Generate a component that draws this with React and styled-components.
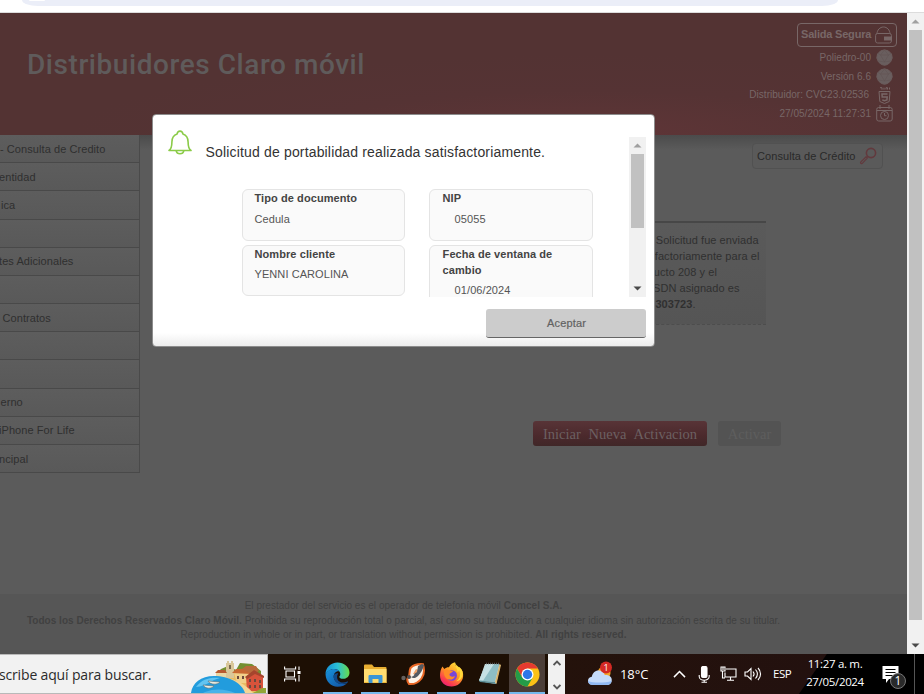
import React from "react";
import styled, { createGlobalStyle } from "styled-components";

const Global = createGlobalStyle`
  *, *::before, *::after { box-sizing: border-box; }
  html, body { margin: 0; padding: 0; overflow: hidden; }
  body { font-family: "Liberation Sans", Arial, sans-serif; }
  svg { display: block; flex: none; }
`;

const Window = styled.div`
  position: relative;
  display: flex;
  flex-direction: column;
  width: 924px;
  height: 694px;
  overflow: hidden;
`;

/* ---------- browser strip ---------- */
const BrowserStrip = styled.div`
  height: 13px;
  flex: none;
  background: #fff;
  border-bottom: 1px solid #dcdcdc;
  padding-left: 22px;
`;
const AddressBar = styled.div`
  width: 816px;
  height: 6px;
  padding-left: 7px;
  background: #ebeef8;
  border-radius: 0 0 16px 16px / 0 0 6px 6px;
`;
const AddressIcon = styled.div`
  width: 16px;
  height: 1px;
  background: #fff;
  border-radius: 0 0 8px 8px;
`;

const Main = styled.div`
  display: flex;
  height: 641px;
  flex: none;
`;
const Page = styled.div`
  width: 907px;
  display: flex;
  flex-direction: column;
  background: #5b5b5b;
`;

/* ---------- header ---------- */
const Header = styled.header`
  height: 122px;
  flex: none;
  display: flex;
  justify-content: space-between;
  padding: 10px 10px 0 27px;
  background: radial-gradient(ellipse 520px 80px at 590px 122px, #5f3537 0%, #553334 55%, #533333 100%);
`;
const SiteTitle = styled.h1`
  margin: 22px 0 0;
  font: 500 28px/40px Roboto, sans-serif;
  letter-spacing: 0.56px;
  color: #5f5b5b;
`;
const Session = styled.div`
  display: flex;
  flex-direction: column;
  align-items: flex-end;
  color: #786767;
`;
const ExitButton = styled.div`
  display: flex;
  align-items: center;
  justify-content: space-between;
  width: 100px;
  height: 24px;
  padding: 0 4px 2px 3px;
  margin-bottom: 1px;
  border: 1px solid #786767;
  border-radius: 4px;
  font-size: 11px;
  font-weight: bold;
  letter-spacing: -0.2px;
  svg { margin-top: 2px; }
`;
const SessionRow = styled.div`
  display: flex;
  align-items: center;
  justify-content: flex-end;
  height: ${(p) => p.$h || 18}px;
  gap: 5px;
  padding-right: 4px;
  font-size: 10px;
  letter-spacing: 0.03px;
  white-space: nowrap;
`;
const SessionText = styled.span`
  margin-right: ${(p) => p.$shift || 0}px;
  padding-bottom: ${(p) => (p.$shift ? 1 : 0)}px;
`;

/* ---------- body ---------- */
const Body = styled.div`
  display: flex;
  flex: 1;
  min-height: 0;
`;
const Sidebar = styled.nav`
  width: 140px;
  flex: none;
`;
const MenuItem = styled.div`
  height: ${(p) => p.$h || 28}px;
  padding-left: ${(p) => p.$x || 0}px;
  margin-left: ${(p) => p.$out || 0}px;
  line-height: ${(p) => (p.$low ? 29 : (p.$h || 28) - 1)}px;
  font-size: 11px;
  letter-spacing: 0.07px;
  white-space: nowrap;
  color: #2f2f2f;
  background: linear-gradient(#5d5d5d, #595959);
  border-bottom: 1px solid #494949;
  border-right: 1px solid #4a4a4a;
`;
const Content = styled.section`
  flex: 1;
  display: flex;
  flex-direction: column;
  background: linear-gradient(#4b4b4b, #5b5b5b 15px);
  padding-top: 8px;
`;
const CreditButton = styled.div`
  display: flex;
  align-items: center;
  justify-content: space-between;
  align-self: flex-end;
  width: 131px;
  height: 26px;
  margin-right: 24px;
  padding: 0 5px 0 4px;
  border: 1px solid #515151;
  border-radius: 4px;
  background: #5a5a5a;
  color: #292929;
  font-size: 11px;
  letter-spacing: 0.07px;
`;
const Notice = styled.div`
  width: 120px;
  height: 104px;
  margin: 52px 141px 0 0;
  align-self: flex-end;
  padding: 9px 0 0 7px;
  border-top: 2px solid #474747;
  border-bottom: 1px dashed #4d4d4d;
  background: linear-gradient(#5a5a5a, #555);
  color: #303030;
  font-size: 11px;
  line-height: 16px;
  letter-spacing: 0.06px;
  white-space: nowrap;
`;
const NoticeLine = styled.div`
  padding-left: ${(p) => p.$x || 0}px;
`;
const Actions = styled.div`
  display: flex;
  justify-content: flex-end;
  gap: 11px;
  margin: 96px 126px 0 0;
  font-family: "Liberation Serif", serif;
`;
const ActionButton = styled.div`
  width: ${(p) => p.$w}px;
  height: 25px;
  border-radius: 3px;
  text-align: center;
  line-height: 27px;
  font-size: 14.5px;
  word-spacing: 4.2px;
  white-space: nowrap;
  color: ${(p) => (p.$primary ? "#6c6062" : "#5e5e5e")};
  background: ${(p) => (p.$primary ? "linear-gradient(#583437, #4b292c 60%, #402728)" : "#535353")};
`;
const Footer = styled.footer`
  height: 60px;
  flex: none;
  padding: 5px 100px 0 0;
  background: #565656;
  text-align: center;
  font-size: 10px;
  letter-spacing: 0.028px;
  line-height: 14.6px;
  white-space: nowrap;
  color: #414141;
`;

/* ---------- scroll bars ---------- */
const ScrollTrack = styled.div`
  width: 17px;
  flex: none;
  display: flex;
  flex-direction: column;
  align-items: center;
  background: #f1f1f1;
  height: 100%;
`;
const ArrowBox = styled.div`
  width: 17px;
  height: 17px;
  display: flex;
  align-items: center;
  justify-content: center;
  margin-top: ${(p) => (p.$end ? "auto" : 0)};
`;
const Thumb = styled.div`
  width: 13px;
  height: ${(p) => p.$h}px;
  background: #c1c1c1;
`;

/* ---------- dialog ---------- */
const Dialog = styled.div`
  position: absolute;
  left: 152px;
  top: 114px;
  width: 503px;
  height: 233px;
  display: flex;
  flex-direction: column;
  border: 1px solid #8c8c8c;
  border-radius: 4px;
  background: linear-gradient(#fff 0 218px, #ececec 231px);
`;
const DialogBody = styled.div`
  display: flex;
  padding: 0 8px 0 15px;
`;
const BellSlot = styled.div`
  width: 37px;
  padding-top: 15px;
`;
const Viewport = styled.div`
  width: 424px;
  height: 160px;
  margin-top: 22px;
  overflow: hidden;
`;
const DialogScroll = styled.div`
  height: 160px;
  margin-top: 22px;
`;
const Message = styled.div`
  height: 52px;
  padding-left: 0.6px;
  line-height: 31px;
  font-size: 14px;
  letter-spacing: 0.16px;
  color: #333;
`;
const CardGrid = styled.div`
  display: grid;
  grid-template-columns: 163px 164px;
  grid-template-rows: 52px 51px;
  gap: 4px 24px;
  margin-left: 37px;
`;
const Card = styled.div`
  height: ${(p) => p.$h || "100%"};
  padding: 0 12px 0 ${(p) => p.$pad || 11.5}px;
  border: 1px solid #e4e4e4;
  border-radius: 6px;
  background: #fafafa;
  font-size: 11px;
  line-height: 16px;
  letter-spacing: 0.08px;
  color: #555;
`;
const CardLabel = styled.div`
  font-weight: bold;
  color: #444;
`;
const CardValue = styled.div`
  margin-top: ${(p) => p.$gap}px;
  padding-left: ${(p) => (p.$indent ? 12 : 0)}px;
`;
const AcceptButton = styled.div`
  align-self: flex-end;
  width: 160px;
  height: 29px;
  margin: 12px 8px 0 0;
  padding-left: 1px;
  border-radius: 3px;
  border-bottom: 1px solid #666;
  background: #ccc;
  text-align: center;
  line-height: 28px;
  font-size: 11px;
  letter-spacing: 0.15px;
  color: #626262;
  -webkit-text-stroke: 0.2px #626262;
`;

/* ---------- task bar ---------- */
const Taskbar = styled.div`
  display: flex;
  height: 40px;
  flex: none;
  background: #1d0f04;
  color: #fff;
  font-family: "Open Sans", "Noto Sans", sans-serif;
`;
const SearchBox = styled.div`
  display: flex;
  justify-content: space-between;
  width: 268px;
  background: #f2f2f2;
  border: 1px solid #b9b9b9;
  border-left: 0;
  color: #2b2b2b;
  font-size: 14px;
  letter-spacing: -0.16px;
  line-height: 40px;
  white-space: nowrap;
`;
const SearchHint = styled.span`
  margin-left: -1px;
`;
const TaskView = styled.div`
  width: 50px;
  padding: 12px 0 0 16px;
`;
const TaskButton = styled.div`
  width: ${(p) => (p.$active ? 36 : 29)}px;
  margin: 0 ${(p) => (p.$active ? 1 : 4)}px 0 ${(p) => (p.$active ? 1 : 5)}px;
  height: 40px;
  display: flex;
  align-items: center;
  justify-content: center;
  border-bottom: 2px solid #76b9ed;
  padding-top: 2px;
  background: ${(p) => (p.$active ? "#4b3e38" : "transparent")};
`;
const BandScroller = styled.div`
  width: 17px;
  margin-left: 2px;
  display: flex;
  flex-direction: column;
  align-items: center;
  justify-content: space-between;
  padding: 6px 0 4px;
  background: #f1f1f1;
`;
const Tray = styled.div`
  flex: 1;
  display: flex;
  align-items: center;
  padding-left: 22px;
  background: linear-gradient(125deg, #24120b 0, #23110f 214px, #000 215px);
`;
const Temperature = styled.div`
  width: 53px;
  margin-left: 7px;
  font-size: 13px;
  letter-spacing: -0.1px;
`;
const TrayIcon = styled.div`
  width: ${(p) => p.$w}px;
`;
const Language = styled.div`
  width: 30px;
  padding: 0 0 2px 1px;
  font-size: 11.5px;
  letter-spacing: -0.5px;
`;
const Clock = styled.div`
  width: 66px;
  text-align: center;
  font-size: 11.5px;
  line-height: 18px;
  letter-spacing: -0.33px;
  white-space: nowrap;
  padding-bottom: 2px;
`;
const Notifications = styled.div`
  width: 37px;
  height: 40px;
  margin-left: 10px;
  border-right: 1px solid #555;
`;

const Arrow = ({ down, color }) => (
  <svg width="9" height="5" viewBox="0 0 9 5">
    <path d={down ? "M.5.5h8l-4 4z" : "M.5 4.5h8l-4-4z"} fill={color} />
  </svg>
);

const LockIcon = () => (
  <svg width="17" height="18" viewBox="0 0 17 18" fill="none" stroke="#786767">
    <path d="M2 8C2 4 5 1 8.500 1s6.500 3 6.500 7" />
    <rect x=".6" y="7.500" width="15.800" height="9.500" rx="2" />
    <path d="M9 10.500h8v4H9z" fill="#786767" stroke="none" />
  </svg>
);
const PolyIcon = () => (
  <svg width="17" height="17" viewBox="0 0 17 17">
    <path d="M8.500.8 12.500 2 15.500 5l.7 4-1.700 4-3 2.500-3 .8-3-.8-3-2.500L.8 9l.7-4 3-3z" fill="#695e5e" stroke="#6b5d5d" />
    <path d="m8.500 1-4 5 4 7 4-7zM2 4.500l2.500 1.500h8L15 4.500M2 12l6.500 1L15 12" fill="none" stroke="#615353" strokeWidth=".5" />
  </svg>
);
const Html5Icon = () => (
  <svg width="17" height="17" viewBox="0 0 17 17" fill="none" stroke="#786767">
    <path d="M4 .7h2v2M8 .7v2M10 2.500V.7h1.500v1.800M13.500.5v2" />
    <path d="m3 4.500.8 10 4.700 2 4.700-2 .8-10z" />
    <path d="M11.500 7H6l.2 3h5l-.3 3-2.400.8-2.200-.8" strokeWidth="1.500" />
  </svg>
);
const DateIcon = () => (
  <svg width="17" height="17" viewBox="0 0 17 17" fill="none" stroke="#786767">
    <rect x=".7" y="2.500" width="15.500" height="13.500" rx="2" />
    <path d="M4 0v4M13 0v4M1 5.500h15M8.500 8v2.700h2" />
    <circle cx="8.500" cy="10.500" r="4" />
  </svg>
);
const SearchIcon = () => (
  <svg width="18" height="18" viewBox="0 0 18 18" fill="none" stroke="#62393d">
    <circle cx="12" cy="6" r="4.600" strokeWidth="1.600" />
    <path d="m8.500 9.500-1 1M7 9.800l1.300 1.300-5 5.200c-1.200 1-2.400-.2-1.400-1.400z" strokeWidth="1.200" />
  </svg>
);
const BellIcon = () => (
  <svg width="24" height="25" viewBox="0 0 24 25" fill="none" stroke="#8bcb48" strokeWidth="1.600" strokeLinejoin="round">
    <path d="M1 20.500c2.600-1.700 2.900-4 2.900-8.500 0-4.200 2-6.900 5.200-8 .3-2 1.400-2.900 2.900-2.900s2.600.9 2.900 2.900c3.200 1.100 5.200 3.800 5.200 8 0 4.500.3 6.800 2.900 8.500z" />
    <path d="M8.200 20.800c.4 1.900 1.800 2.900 3.800 2.900s3.400-1 3.800-2.900" />
  </svg>
);

const SearchArt = () => (
  <svg width="76" height="38" viewBox="0 0 76 38">
    <path d="M25 19 30 14l7-3 8 4 4-7 12 1 9 7v10H32z" fill="#748f31" />
    <path d="m27 18 12-2 9 1 12 5 11 2v14H50z" fill="#e8bb63" />
    <path d="M35 23V8h1V6h2v2h2V6h2v2h1v15z" fill="#d9c79a" />
    <path d="M38 10h2v4h-2z" fill="#7b6a4f" />
    <path d="M25 18h10v5H25z" fill="#ead7a4" />
    <path d="m24 18 3-3h7l2 3z" fill="#b85a30" />
    <path d="M43 18h15v10H46z" fill="#f1d08a" />
    <path d="m41 18 4-4h12l3 5z" fill="#c76832" />
    <path d="m51 14 4-3h10l3 5-7 3z" fill="#b96b3c" />
    <path d="m55 22 8-6 9 5v15H56z" fill="#d7533b" />
    <path d="m54 22 9-7 10 6v2l-9-4-8 5z" fill="#a5452d" />
    <path d="M46 21h2v3h-2zm5 0h2v3h-2zm7 3h2v3h-2zm5 0h2v3h-2zm5 1h2v3h-2zm-10 5h2v3h-2zm5 0h2v3h-2zm5 0h2v3h-2z" fill="#6b4a3e" />
    <path d="M28 22c14 0 28 8 34 16H46z" fill="#f3d596" />
    <path d="M0 38c1-10 10-17 23-17 15 0 28 7 31 17z" fill="#229cdd" />
    <path d="M5 32c6-8 14-10 24-9-9 2-13 8-24 9z" fill="#62c4f1" />
    <path d="M14 37c10-4 21-3 30 1H12z" fill="#48b3ea" />
    <path d="m17 26 12 1c-2 3-10 3-12-1zM12 30l11 1c-2 3-9 3-11-1z" fill="#ececdf" stroke="#566b77" strokeWidth=".6" />
    <path d="M71 33h4v5H62z" fill="#91a637" />
  </svg>
);
const TaskViewIcon = () => (
  <svg width="17" height="16" viewBox="0 0 17 16" fill="none" stroke="#fff" strokeWidth="1.100">
    <path d="M.6.500V3h11V.500M.6 15.500V13h11v2.500M2 5h8.500v6H2zM15 .500v3.500M15 9v6.500" />
    <path d="M13.500 5h3v3h-3z" fill="#fff" stroke="none" />
  </svg>
);
const EdgeIcon = () => (
  <svg width="25" height="25" viewBox="0 0 25 25">
    <defs>
      <linearGradient id="edgeTop" x1="0" y1=".5" x2="1" y2=".5">
        <stop offset="0" stopColor="#168fd7" /><stop offset=".5" stopColor="#2bc0d6" /><stop offset="1" stopColor="#68dc4a" />
      </linearGradient>
      <linearGradient id="edgeBase" x1="0" y1="0" x2="1" y2="1">
        <stop offset="0" stopColor="#1793dc" /><stop offset="1" stopColor="#124e9e" />
      </linearGradient>
    </defs>
    <path d="M.6 13C0 5.500 6 .5 12.500.5S24.500 5 24.500 10.500c0 4-3 6.300-6.300 6.300-2.600 0-3.900-1-3.900-1.800 0-.7 1-1 1-3 0-2.800-2.700-5-6-5-4 0-7.500 2.500-8.700 6z" fill="url(#edgeTop)" />
    <path d="M.6 13C1.500 9 5.500 7 9 7c2.700 0 4.700 1 5.700 2.500-2-.8-6 .8-6 5 0 4.500 4 7.500 8.500 7.500 2.500 0 4-.6 5.500-1.600C20.500 23 17 24.700 12.500 24.700 6 24.700.9 19.500.6 13z" fill="url(#edgeBase)" />
    <path d="M8.700 14c-.5 5 4 8.400 8.800 8 2.300 0 3.800-.6 5.400-1.700.4-.5 0-1-.5-.7-5.700 2.700-10.600-.3-10.300-4.800 0-1.500.5-2.500 1.200-3.300-2.200-.5-4.400.5-4.600 2.500z" fill="#114a8b" />
  </svg>
);
const FolderIcon = () => (
  <svg width="23" height="20" viewBox="0 0 23 20">
    <path d="M0 1.500Q0 .5 1 .5h7l2 2.500h11.500q1 0 1 1V19H0z" fill="#e8ae32" />
    <path d="M0 5h22.500v13.500H0z" fill="#ffdc70" />
    <path d="M4.500 19v-7q0-1 1-1h12q1 0 1 1v7h-4v-4h-6v4z" fill="#3a94d6" />
    <path d="M0 18h4.500v1H0zm18.500 0h4v1h-4z" fill="#efb938" />
  </svg>
);
const BrushIcon = () => (
  <svg width="25" height="23" viewBox="0 0 25 23">
    <path d="M9.500 5C13 1.500 17 .8 22 1.200c1.500 5 1 11-1.500 14.300-3.500 4.500-8.500 6-12.500 5.500-1.500-2-2-5-1-6.500 2-1 1-6 2.500-9.500z" fill="#fff4e8" stroke="#e86624" strokeWidth="2" />
    <path d="m12 11 3-5 3 1-3 5z" fill="#f0a36b" />
    <path d="m17 3 4-2 2 1c-1 4-3 8-6 11-2 2-5 3-7 1 2-.5 3-1 3.500-3 1-1.500 2-1 2.500-2z" fill="#565b62" />
    <circle cx="2.500" cy="15" r="2.200" fill="#66615f" />
    <circle cx="8" cy="14" r="2" fill="#504b4b" />
  </svg>
);
const FirefoxIcon = () => (
  <svg width="25" height="25" viewBox="0 0 25 25">
    <defs>
      <linearGradient id="fox" x1=".8" y1="0" x2=".2" y2="1">
        <stop offset="0" stopColor="#ffe63c" /><stop offset=".45" stopColor="#ff9823" /><stop offset=".8" stopColor="#fb3b50" /><stop offset="1" stopColor="#e51a80" />
      </linearGradient>
    </defs>
    <path d="M3.500 4.500 5.300 7C7 5.500 8.500 5 10 5.200 11 2.500 13 .8 16 .2c-.5 3 1.500 4 3.500 6L20.500 5c3 3 4 6 3.600 9.500-.7 6-5.600 10-11.600 10C6 24.500 1 20 1 13.500c0-3 .7-6.500 2.500-9z" fill="url(#fox)" />
    <circle cx="12.800" cy="13.500" r="5.200" fill="#7846d8" />
    <path d="M5 8c4-1 5 1 9 1-1 2-3.500 2-3.500 3.500 0 2 3 3 5.500 1.500-1 3-3.500 4-6 3.500C6 17 4.500 13 5 8z" fill="#ff8a27" />
    <path d="M16 .2c-.5 4 2.500 5 2.500 10 1-.5 1.500-1.500 1.500-2.500 2.500 5 .5 9.500-3 11.500 5-.5 7.500-5 6.500-9.500C22.500 5.500 17 4.500 16 .2z" fill="#ffd83b" />
  </svg>
);
const NotepadIcon = () => (
  <svg width="24" height="24" viewBox="0 0 24 24">
    <path d="m7 2 15.500 1L18 22 1 19z" fill="#e0efef" />
    <path d="M8 2h13.500l-4.500 18L1 18.500z" fill="#8ebdc4" />
    <path d="M8 2h8L5 18.800l-4-.4z" fill="#c6e1e4" />
    <path d="m1 18.500 16 1.500 1 2-16-2z" fill="#5c8d95" />
    <path d="m21.500 2 1.500 1-4.500 19-1.500-2z" fill="#d8b26c" />
    <path d="M8 1.500h14" stroke="#555" strokeWidth="1.500" strokeDasharray="1 1" />
  </svg>
);
const ChromeIcon = () => (
  <svg width="25" height="25" viewBox="0 0 25 25">
    <circle cx="12.500" cy="12.500" r="12" fill="#fbc116" />
    <path d="M2.110 6.500A12 12 0 0 1 22.900 6.500H12.500L7.300 15.500z" fill="#e53a30" />
    <path d="M2.110 6.500A12 12 0 0 0 12.500 24.500l5.200-9H7.300z" fill="#249b48" />
    <circle cx="12.500" cy="12.500" r="6" fill="#fff" />
    <circle cx="12.500" cy="12.500" r="4.700" fill="#2b76e8" />
  </svg>
);
const Chevron = ({ down, w = 8, color = "#555", sw = 1.8 }) => (
  <svg width={w} height={w * 0.75} viewBox="0 0 8 6" fill="none" stroke={color} strokeWidth={sw}>
    <path d={down ? "m.6 1 3.400 3.400L7.400 1" : "M.6 5 4 1.600 7.400 5"} />
  </svg>
);
const WeatherIcon = () => (
  <svg width="26" height="26" viewBox="0 0 26 26">
    <circle cx="17" cy="12" r="6.500" fill="#f2a42b" />
    <path d="M6 24c-3.500 0-5-2-5-4.200 0-2.300 1.500-3.800 3.800-4C5.500 12 8 9.500 11.500 9.500c3.200 0 5.400 1.800 6.300 4.500 4-.2 7 1.500 7 5 0 3-2 5-5 5z" fill="#c5dbfa" />
    <path d="M1 20c5 2 17 2 23.700 0-.6 2.500-2.400 4-5 4H6c-3 0-4.700-1.600-5-4z" fill="#91b9f3" />
    <circle cx="19" cy="6.500" r="6" fill="#d42a24" />
    <text x="19" y="10" fontSize="9" fontFamily="Open Sans" textAnchor="middle" fill="#fff">1</text>
  </svg>
);
const MicIcon = () => (
  <svg width="12" height="17" viewBox="0 0 12 17" fill="none" stroke="#fff" strokeWidth="1.100">
    <rect x="3.500" y=".5" width="5.500" height="11" rx="1.500" fill="#fff" />
    <path d="M1.200 9v1.500c0 5 10 5 10 0V9M6.200 14v2M3.500 16.300h5.500" />
  </svg>
);
const NetworkIcon = () => (
  <svg width="17" height="16" viewBox="0 0 17 16" fill="none" stroke="#fff" strokeWidth="1.100">
    <path d="M6 3h10v8H5V6.500M10.500 11v3M7 14.300h7M2.500 5.500V12H5M1 1h4v4H1zM3 1v3" />
  </svg>
);
const VolumeIcon = () => (
  <svg width="18" height="14" viewBox="0 0 18 14" fill="none" stroke="#fff" strokeWidth="1.100">
    <path d="M1 5h2.500L7 1.500v11L3.500 9H1zM9 4.500c1.300 1.500 1.300 3.500 0 5M11.500 2.500c2.300 2.700 2.300 6.300 0 9M14 1c3.400 3.500 3.400 8.500 0 12" />
  </svg>
);
const NotificationIcon = () => (
  <svg width="28" height="40" viewBox="0 0 28 40">
    <path d="M4.500 12h16v13H11l-3 4v-4H4.500z" fill="#fff" />
    <path d="M7.500 15.500h10M7.500 18.500h10M7.500 21.500h7" stroke="#000" strokeWidth="1.200" />
    <circle cx="20" cy="27" r="7.500" fill="#2a2a2a" stroke="#777" />
    <text x="20" y="31.300" fontSize="12" fontFamily="Open Sans" textAnchor="middle" fill="#fff">1</text>
  </svg>
);

const menu = [
  { text: "- Consulta de Credito", h: 28, low: true },
  { text: "entidad", out: -1, low: true },
  { text: "ica", x: 1, h: 29 },
  { text: "" },
  { text: "tes Adicionales", out: -1 },
  { text: "" },
  { text: "Contratos", x: 2.5, low: true },
  { text: "" },
  { text: "", h: 29 },
  { text: "erno", x: 0.5 },
  { text: "iPhone For Life", out: -1 },
  { text: "ncipal", out: -1, low: true },
];

const session = [
  { text: "Poliedro-00", Icon: PolyIcon, h: 19 },
  { text: "Versión 6.6", Icon: PolyIcon, h: 19 },
  { text: "Distribuidor: CVC23.02536", Icon: Html5Icon, h: 18, shift: 2 },
  { text: "27/05/2024 11:27:31", Icon: DateIcon, h: 18 },
];

const apps = [EdgeIcon, FolderIcon, BrushIcon, FirefoxIcon, NotepadIcon, ChromeIcon];

const Scrollbar = ({ thumb }) => (
  <ScrollTrack>
    <ArrowBox><Arrow color="#a0a0a0" /></ArrowBox>
    <Thumb $h={thumb} />
    <ArrowBox $end><Arrow down color="#4a4a4a" /></ArrowBox>
  </ScrollTrack>
);

const PortabilityDialog = () => (
  <Dialog role="dialog">
    <DialogBody>
      <BellSlot><BellIcon /></BellSlot>
      <Viewport>
        <Message>Solicitud de portabilidad realizada satisfactoriamente.</Message>
        <CardGrid>
          <Card><CardLabel>Tipo de documento</CardLabel><CardValue $gap={5}>Cedula</CardValue></Card>
          <Card $pad={12.6}><CardLabel>NIP</CardLabel><CardValue $gap={5} $indent>05055</CardValue></Card>
          <Card><CardLabel>Nombre cliente</CardLabel><CardValue $gap={4}>YENNI CAROLINA</CardValue></Card>
          <Card $h="70px" $pad={12.6}>
            <CardLabel>Fecha de ventana de cambio</CardLabel>
            <CardValue $gap={4} $indent>01/06/2024</CardValue>
          </Card>
        </CardGrid>
      </Viewport>
      <DialogScroll><Scrollbar thumb={74} /></DialogScroll>
    </DialogBody>
    <AcceptButton>Aceptar</AcceptButton>
  </Dialog>
);

export default function App() {
  return (
    <Window>
      <Global />
      <BrowserStrip><AddressBar><AddressIcon /></AddressBar></BrowserStrip>
      <Main>
        <Page>
          <Header>
            <SiteTitle>Distribuidores Claro móvil</SiteTitle>
            <Session>
              <ExitButton>Salida Segura<LockIcon /></ExitButton>
              {session.map(({ text, Icon, h, shift }) => (
                <SessionRow key={text} $h={h}>
                  <SessionText $shift={shift}>{text}</SessionText>
                  <Icon />
                </SessionRow>
              ))}
            </Session>
          </Header>
          <Body>
            <Sidebar>
              {menu.map(({ text, x, out, h, low }, i) => (
                <MenuItem key={i} $x={x} $out={out} $h={h} $low={low}>{text}</MenuItem>
              ))}
            </Sidebar>
            <Content>
              <CreditButton>Consulta de Crédito<SearchIcon /></CreditButton>
              <Notice>
                <NoticeLine $x={2.8}>Solicitud fue enviada</NoticeLine>
                <NoticeLine $x={1.8}>factoriamente para el</NoticeLine>
                <NoticeLine $x={0.8}>ucto 208 y el</NoticeLine>
                <NoticeLine>SDN asignado es</NoticeLine>
                <NoticeLine $x={2.4}><b>303723</b>.</NoticeLine>
              </Notice>
              <Actions>
                <ActionButton $w={174} $primary>Iniciar Nueva Activacion</ActionButton>
                <ActionButton $w={63}>Activar</ActionButton>
              </Actions>
            </Content>
          </Body>
          <Footer>
            <div>El prestador del servicio es el operador de telefonía móvil <b>Comcel S.A.</b></div>
            <div><b>Todos los Derechos Reservados Claro Móvil.</b> Prohibida su reproducción total o parcial, así como su traducción a cualquier idioma sin autorización escrita de su titular.</div>
            <div>Reproduction in whole or in part, or translation without permission is prohibited. <b>All rights reserved.</b></div>
          </Footer>
        </Page>
        <Scrollbar thumb={590} />
      </Main>
      <Taskbar>
        <SearchBox><SearchHint>scribe aquí para buscar.</SearchHint><SearchArt /></SearchBox>
        <TaskView><TaskViewIcon /></TaskView>
        {apps.map((Icon, i) => (
          <TaskButton key={i} $active={i === apps.length - 1}><Icon /></TaskButton>
        ))}
        <BandScroller><Chevron /><Chevron down /></BandScroller>
        <Tray>
          <WeatherIcon />
          <Temperature>18°C</Temperature>
          <TrayIcon $w={25}><Chevron w={13} color="#fff" sw={0.9} /></TrayIcon>
          <TrayIcon $w={22}><MicIcon /></TrayIcon>
          <TrayIcon $w={24}><NetworkIcon /></TrayIcon>
          <TrayIcon $w={28}><VolumeIcon /></TrayIcon>
          <Language>ESP</Language>
          <Clock>11:27 a. m.<br />27/05/2024</Clock>
          <Notifications><NotificationIcon /></Notifications>
        </Tray>
      </Taskbar>
      <PortabilityDialog />
    </Window>
  );
}
